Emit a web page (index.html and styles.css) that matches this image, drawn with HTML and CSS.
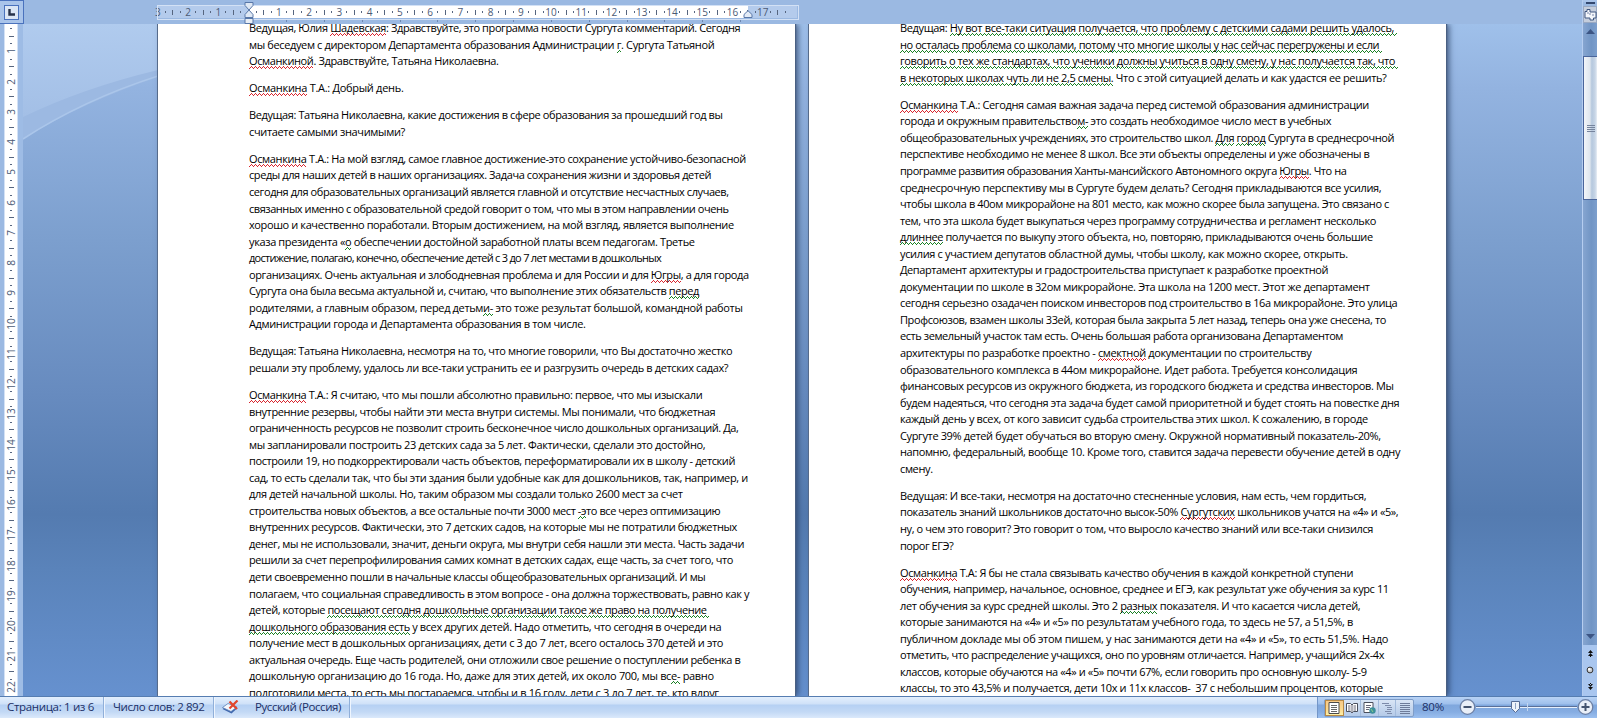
FILE: index.html
```
<!DOCTYPE html>
<html lang="ru">
<head>
    <meta charset="UTF-8">
    <meta name="viewport" content="width=device-width, initial-scale=1.0">
    <title>Документ</title>
    <link rel="stylesheet" href="styles.css">
</head>
<body>
    <div class="window">
        <div class="main">
            <div class="top-ruler">
                <div class="tab-box"><div class="tab-button">
                    <svg width="7" height="7" viewBox="0 0 7 7"><path d="M1.5 0V5.5H7" fill="none" stroke="#27324a" stroke-width="2.4"/></svg>
                </div></div>
                <div class="h-ruler">
                    <div class="scale" id="hScale"></div>
                    <svg class="indent" width="10" height="22" viewBox="0 0 10 22">
                        <path d="M1 .5H9V3.5L5 8L9 12.500V15.500H1V12.500L5 8L1 3.500Z" fill="#dfe8f4" stroke="#5877a8"/>
                        <path d="M1 16.500H9V21.500H1Z" fill="#e8eef6" stroke="#5877a8"/>
                    </svg>
                    <svg class="indent-right" width="10" height="8" viewBox="0 0 10 8">
                        <path d="M1 7.500V4.500L5 .7L9 4.500V7.500Z" fill="#e3ebf6" stroke="#5877a8"/>
                    </svg>
                </div>
            </div>
            <div class="workspace">
                <div class="v-ruler"><div class="v-scale" id="vScale"></div></div>
                <div class="desk">
                    <svg class="swoosh" width="135" height="672" viewBox="0 0 135 672">
                        <defs>
                            <linearGradient id="sky" x1="0" y1="0" x2="0" y2="1">
                                <stop offset="0" stop-color="#b0cbee"/>
                                <stop offset="1" stop-color="#a3bfe6"/>
                            </linearGradient>
                        </defs>
                        <path d="M0 0H135V53Q60 78 0 115Z" fill="#9cb9e2"/>
                        <path d="M0 0H135V46Q60 64 0 93Z" fill="url(#sky)"/>
                        <path d="M0 115Q60 76 135 52" fill="none" stroke="#abc6ea" stroke-width="1.5"/>
                    </svg>
                    <div class="page">
                        <p>
                            <span class="line" data-width="491.3">Ведущая, Юлия <u class="spell">Шадевская</u>: Здравствуйте, это программа новости Сургута комментарий. Сегодня</span>
                            <span class="line" data-width="465.3">мы беседуем с директором Департамента образования Администрации <u class="grammar">г</u>. Сургута Татьяной</span>
                            <span class="line" data-width="249.5"><u class="spell">Османкиной</u>. Здравствуйте, Татьяна Николаевна.</span>
                        </p>
                        <p>
                            <span class="line" data-width="154.5"><u class="spell">Османкина</u> Т.А.: Добрый день.</span>
                        </p>
                        <p>
                            <span class="line" data-width="473.5">Ведущая: Татьяна Николаевна, какие достижения в сфере образования за прошедший год вы</span>
                            <span class="line" data-width="156">считаете самыми значимыми?</span>
                        </p>
                        <p>
                            <span class="line" data-width="497"><u class="spell">Османкина</u> Т.А.: На мой взгляд, самое главное достижение-это сохранение устойчиво-безопасной</span>
                            <span class="line" data-width="462">среды для наших детей в наших организациях. Задача сохранения жизни и здоровья детей</span>
                            <span class="line" data-width="479.7">сегодня для образовательных организаций является главной и отсутствие несчастных случаев,</span>
                            <span class="line" data-width="479.5">связанных именно с образовательной средой говорит о том, что мы в этом направлении очень</span>
                            <span class="line" data-width="484.7">хорошо и качественно поработали. Вторым достижением, на мой взгляд, является выполнение</span>
                            <span class="line" data-width="445.6">указа президента «<u class="grammar">о</u> обеспечении достойной заработной платы всем педагогам. Третье</span>
                            <span class="line" data-width="412">достижение, полагаю, конечно, обеспечение детей с 3 до 7 лет местами в дошкольных</span>
                            <span class="line" data-width="499.6">организациях. Очень актуальная и злободневная проблема и для России и для <u class="spell">Югры</u>, а для города</span>
                            <span class="line" data-width="450">Сургута она была весьма актуальной и, считаю, что выполнение этих обязательств <u class="grammar">перед</u></span>
                            <span class="line" data-width="493.5">родителями, а главным образом, перед детьм<u class="grammar">и-</u> это тоже результат большой, командной работы</span>
                            <span class="line" data-width="336.6">Администрации города и Департамента образования в том числе.</span>
                        </p>
                        <p>
                            <span class="line" data-width="483.3">Ведущая: Татьяна Николаевна, несмотря на то, что многие говорили, что Вы достаточно жестко</span>
                            <span class="line" data-width="479.2">решали эту проблему, удалось ли все-таки устранить ее и разгрузить очередь в детских садах?</span>
                        </p>
                        <p>
                            <span class="line" data-width="453.3"><u class="spell">Османкина</u> Т.А.: Я считаю, что мы пошли абсолютно правильно: первое, что мы изыскали</span>
                            <span class="line" data-width="466.3">внутренние резервы, чтобы найти эти места внутри системы. Мы понимали, что бюджетная</span>
                            <span class="line" data-width="489.3">ограниченность ресурсов не позволит строить бесконечное число дошкольных организаций. Да,</span>
                            <span class="line" data-width="456.3">мы запланировали построить 23 детских сада за 5 лет. Фактически, сделали это достойно,</span>
                            <span class="line" data-width="486">построили 19, но подкорректировали часть объектов, переформатировали их в школу - детский</span>
                            <span class="line" data-width="499">сад, то есть сделали так, что бы эти здания были удобные как для дошкольников, так, например, и</span>
                            <span class="line" data-width="433.7">для детей начальной школы. Но, таким образом мы создали только 2600 мест за счет</span>
                            <span class="line" data-width="471.3">строительства новых объектов, а все остальные почти 3000 мест <u class="grammar">-э</u>то все через оптимизацию</span>
                            <span class="line" data-width="488">внутренних ресурсов. Фактически, это 7 детских садов, на которые мы не потратили бюджетных</span>
                            <span class="line" data-width="495">денег, мы не использовали, значит, деньги округа, мы внутри себя нашли эти места. Часть задачи</span>
                            <span class="line" data-width="484">решили за счет перепрофилирования самих комнат в детских садах, еще часть, за счет того, что</span>
                            <span class="line" data-width="456.3">дети своевременно пошли в начальные классы общеобразовательных организаций. И мы</span>
                            <span class="line" data-width="500">полагаем, что социальная справедливость в этом вопросе - она должна торжествовать, равно как у</span>
                            <span class="line" data-width="460">детей, которые <u class="grammar">посещают сегодня дошкольные организации такое же право на получение&nbsp;</u></span>
                            <span class="line" data-width="472.3"><u class="grammar">дошкольного образования есть</u> у всех других детей. Надо отметить, что сегодня в очереди на</span>
                            <span class="line" data-width="474">получение мест в дошкольных организациях, дети с 3 до 7 лет, всего осталось 370 детей и это</span>
                            <span class="line" data-width="491.3">актуальная очередь. Еще часть родителей, они отложили свое решение о поступлении ребенка в</span>
                            <span class="line" data-width="464.7">дошкольную организацию до 16 года. Но, даже для этих детей, их около 700, мы вс<u class="grammar">е-</u> равно</span>
                            <span class="line" data-width="469.7">подготовили места, то есть мы постараемся, чтобы и в 16 году, дети с 3 до 7 лет, те, кто вдруг</span>
                        </p>
                    </div>
                    <div class="page">
                        <p>
                            <span class="line" data-width="496.5">Ведущая: <u class="grammar">Ну вот все-таки ситуация получается, что проблему с детскими садами решить удалось,&nbsp;</u></span>
                            <span class="line" data-width="481.5"><u class="grammar">но осталась проблема со школами, потому что многие школы у нас сейчас перегружены и если&nbsp;</u></span>
                            <span class="line" data-width="497.5"><u class="grammar">говорить о тех же стандартах, что ученики должны учиться в одну смену, у нас получается так, что&nbsp;</u></span>
                            <span class="line" data-width="486.5"><u class="grammar">в некоторых школах чуть ли не 2,5 смены.</u> Что с этой ситуацией делать и как удастся ее решить?</span>
                        </p>
                        <p>
                            <span class="line" data-width="469"><u class="spell">Османкина</u> Т.А.: Сегодня самая важная задача перед системой образования администрации</span>
                            <span class="line" data-width="431">города и окружным правительство<u class="grammar">м-</u> это создать необходимое число мест в учебных</span>
                            <span class="line" data-width="494">общеобразовательных учреждениях, это строительство школ. <u class="grammar">Для</u> <u class="grammar">город</u> Сургута в среднесрочной</span>
                            <span class="line" data-width="469.3">перспективе необходимо не менее 8 школ. Все эти объекты определены и уже обозначены в</span>
                            <span class="line" data-width="446.3">программе развития образования Ханты-мансийского Автономного округа <u class="spell">Югры</u>. Что на</span>
                            <span class="line" data-width="481.3">среднесрочную перспективу мы в Сургуте будем делать? Сегодня прикладываются все усилия,</span>
                            <span class="line" data-width="489">чтобы школа в 40ом микрорайоне на 801 место, как можно скорее была запущена. Это связано с</span>
                            <span class="line" data-width="476">тем, что эта школа будет выкупаться через программу сотрудничества и регламент несколько</span>
                            <span class="line" data-width="472.7"><u class="grammar">длиннее</u> получается по выкупу этого объекта, но, повторяю, прикладываются очень большие</span>
                            <span class="line" data-width="447.7">усилия с участием депутатов областной думы, чтобы школу, как можно скорее, открыть.</span>
                            <span class="line" data-width="428">Департамент архитектуры и градостроительства приступает к разработке проектной</span>
                            <span class="line" data-width="469.7">документации по школе в 32ом микрорайоне. Эта школа на 1200 мест. Этот же департамент</span>
                            <span class="line" data-width="497.3">сегодня серьезно озадачен поиском инвесторов под строительство в 16а микрорайоне. Это улица</span>
                            <span class="line" data-width="486">Профсоюзов, взамен школы 33ей, которая была закрыта 5 лет назад, теперь она уже снесена, то</span>
                            <span class="line" data-width="443">есть земельный участок там есть. Очень большая работа организована Департаментом</span>
                            <span class="line" data-width="411.3">архитектуры по разработке проектно - <u class="spell">смектной</u> документации по строительству</span>
                            <span class="line" data-width="457.3">образовательного комплекса в 44ом микрорайоне. Идет работа. Требуется консолидация</span>
                            <span class="line" data-width="493.7">финансовых ресурсов из окружного бюджета, из городского бюджета и средства инвесторов. Мы</span>
                            <span class="line" data-width="499.3">будем надеяться, что сегодня эта задача будет самой приоритетной и будет стоять на повестке дня</span>
                            <span class="line" data-width="467.7">каждый день у всех, от кого зависит судьба строительства этих школ. К сожалению, в городе</span>
                            <span class="line" data-width="480.7">Сургуте 39% детей будет обучаться во вторую смену. Окружной нормативный показатель-20%,</span>
                            <span class="line" data-width="500">напомню, федеральный, вообще 10. Кроме того, ставится задача перевести обучение детей в одну</span>
                            <span class="line" data-width="32.7">смену.</span>
                        </p>
                        <p>
                            <span class="line" data-width="466.3">Ведущая: И все-таки, несмотря на достаточно стесненные условия, нам есть, чем гордиться,</span>
                            <span class="line" data-width="498.3">показатель знаний школьников достаточно высок-50% <u class="spell">Сургутских</u> школьников учатся на «4» и «5»,</span>
                            <span class="line" data-width="473">ну, о чем это говорит? Это говорит о том, что выросло качество знаний или все-таки снизился</span>
                            <span class="line" data-width="53.3">порог ЕГЭ?</span>
                        </p>
                        <p>
                            <span class="line" data-width="453"><u class="spell">Османкина</u> Т.А: Я бы не стала связывать качество обучения в каждой конкретной ступени</span>
                            <span class="line" data-width="488.7">обучения, например, начальное, основное, среднее и ЕГЭ, как результат уже обучения за курс 11</span>
                            <span class="line" data-width="460.3">лет обучения за курс средней школы. Это 2 <u class="grammar">разных</u> показателя. И что касается числа детей,</span>
                            <span class="line" data-width="453">которые занимаются на «4» и «5» по результатам учебного года, то здесь не 57, а 51,5%, в</span>
                            <span class="line" data-width="488">публичном докладе мы об этом пишем, у нас занимаются дети на «4» и «5», то есть 51,5%. Надо</span>
                            <span class="line" data-width="484">отметить, что распределение учащихся, оно по уровням отличается. Например, учащийся 2х-4х</span>
                            <span class="line" data-width="466.7">классов, которые обучаются на «4» и «5» почти 67%, если говорить про основную школу- 5-9</span>
                            <span class="line" data-width="482.7">классы, то это 43,5% и получается, дети 10х и 11х классов-&nbsp; 37 с небольшим процентов, которые</span>
                        </p>
                    </div>
                </div>
            </div>
        </div>
        <div class="scrollbar">
            <div class="split"></div>
            <div class="ruler-toggle">
                <svg width="13" height="13" viewBox="0 0 13 13"><path d="M1 3.500H3V1.500H6V4H12V10H9.500V12H6V10H1Z" fill="#f4f7fb" stroke="#3f5680"/><path d="M6 5V7M9 6V8M3 5H5" stroke="#7a86a8"/></svg>
            </div>
            <div class="track">
                <svg class="arrow" width="9" height="5" viewBox="0 0 9 5"><path d="M0 5L4.500 0L9 5Z" fill="#3c5584"/></svg>
                <div class="thumb"><i></i><i></i><i></i><i></i></div>
                <svg class="arrow down" width="9" height="5" viewBox="0 0 9 5"><path d="M0 0L4.500 5L9 0Z" fill="#3c5584"/></svg>
            </div>
            <div class="browse">
                <svg width="5" height="7" viewBox="0 0 5 7"><path d="M0 3L2.500 0L5 3ZM0 6L2.500 3L5 6ZM2 5H3V7H2Z" fill="#111"/></svg>
                <svg width="8" height="8" viewBox="0 0 8 8"><circle cx="4" cy="4" r="2.900" fill="#c9cdd3" stroke="#333"/><circle cx="3.200" cy="3.200" r="1.200" fill="#fff"/></svg>
                <svg width="5" height="7" viewBox="0 0 5 7"><path d="M0 1L2.500 4L5 1ZM0 4L2.500 7L5 4ZM2 0H3V2H2Z" fill="#111"/></svg>
            </div>
        </div>
    </div>

    <div class="status">
        <div class="cell pages"><span class="line" data-width="87">Страница: 1 из 6</span></div>
        <div class="cell words"><span class="line" data-width="91.500">Число слов: 2 892</span></div>
        <div class="cell lang">
            <svg width="17" height="15" viewBox="0 0 17 15">
                <path d="M.5 9L6 4.500L15.500 8L9.500 13.500Z" fill="#3f67ad"/>
                <path d="M.5 7.500L6 3.500L15 7L9 11.500Z" fill="#f4f7fc" stroke="#5b7fb8" stroke-width=".8"/>
                <path d="M7.500 1.500L15 9M15.500 .5L7.500 8.500" stroke="#e2452c" stroke-width="2.200"/>
            </svg>
            <span class="line" data-width="86">Русский (Россия)</span>
        </div>
        <div class="status-right">
            <div class="views">
                <div class="view active"><svg width="12" height="12" viewBox="0 0 12 12"><path d="M1 .5H11V11.500H1Z" fill="#fff" stroke="#4a4a4a"/><path d="M3 3.500H9M3 5.500H9M3 7.500H9M3 9.500H9" stroke="#666"/></svg></div>
                <div class="view"><svg width="12" height="12" viewBox="0 0 12 12"><path d="M.5 1.500H4.500L6 3L7.500 1.500H11.500V9.500H7.500L6 11L4.500 9.500H.5Z" fill="#fff" stroke="#4a4f5c"/><path d="M6 3V11M2 4H4.500M2 6H4.500M2 8H4.500M7.500 4H10M7.500 6H10M7.500 8H10" stroke="#667"/></svg></div>
                <div class="view"><svg width="13" height="12" viewBox="0 0 13 12"><path d="M1 .5H10V10.500H1Z" fill="#fff" stroke="#4a4f5c"/><path d="M3 3.500H8M3 5.500H7M3 7.500H6" stroke="#667"/><circle cx="9.500" cy="8.500" r="3.200" fill="#3d8f9b"/><path d="M8 7L10 10" stroke="#8fd08a"/></svg></div>
                <div class="view"><svg width="12" height="12" viewBox="0 0 12 12"><path d="M1 1.500H8M4 3.500H10M6 5.500H11M6 7.500H11M4 9.500H10M6 11.500H11" stroke="#7d8baa"/></svg></div>
                <div class="view"><svg width="12" height="12" viewBox="0 0 12 12"><path d="M1 1.500H11M1 3.500H11M1 5.500H11M1 7.500H11M1 9.500H11M1 11.500H11" stroke="#6d7b99"/></svg></div>
            </div>
            <span class="line percent" data-width="22">80%</span>
            <svg class="zoom" width="138" height="20" viewBox="0 0 138 20">
                <path d="M17 9.500H118" stroke="#5a7099"/><path d="M17 10.500H118" stroke="#e7f0fc"/>
                <path d="M68.500 6V14" stroke="#c3d6f0"/>
                <circle cx="8.500" cy="10" r="7.300" fill="#e9eff8" stroke="#6b7fa4" stroke-width="1.300"/>
                <path d="M4.500 10H12.500" stroke="#44546f" stroke-width="2"/>
                <circle cx="126.500" cy="10" r="7.300" fill="#e9eff8" stroke="#6b7fa4" stroke-width="1.300"/>
                <path d="M122.500 10H130.500M126.500 6V14" stroke="#44546f" stroke-width="2"/>
                <path d="M52.500 4.500H60.500V11.500L56.500 15.500L52.500 11.500Z" fill="#eef3fa" stroke="#566c95"/><path d="M56.500 6V12" stroke="#8fa3c4"/>
            </svg>
        </div>
    </div>

    <script>
        // ruler marks, four cells per centimetre
        function buildScale(id, from, to) {
            const scale = document.getElementById(id);
            for (let k = from; k <= to; k++) {
                const cell = document.createElement("span");
                if (k === 0) {
                    cell.className = "zero";
                } else if (k % 4 === 0) {
                    cell.className = "num";
                    cell.innerHTML = "<b>" + Math.abs(k / 4) + "</b>";
                } else if (k % 2 === 0) {
                    cell.className = "bar";
                } else {
                    cell.className = "dot";
                }
                scale.appendChild(cell);
            }
        }

        // spread the letters so that each line has its own set width
        function fitLines() {
            document.querySelectorAll(".line").forEach(line => {
                const target = parseFloat(line.dataset.width);
                const natural = line.getBoundingClientRect().width;
                line.style.letterSpacing = (target - natural) / line.textContent.length + "px";
            });
        }

        buildScale("hScale", -12, 71);
        buildScale("vScale", 1, 88);
        fitLines();
    </script>
</body>
</html>
```
FILE: styles.css
```
* {
    box-sizing: border-box;
}

body {
    margin: 0;
    width: 1597px;
    height: 718px;
    overflow: hidden;
    font-family: "Open Sans", "Noto Sans", sans-serif;
    font-size: 11px;
    color: #000;
}

svg {
    display: block;
    flex: none;
}

.window {
    display: flex;
    height: 696px;
}

.main {
    width: 1582px;
}

/* rulers */
.top-ruler {
    display: flex;
    height: 24px;
    background: #9bb9e2;
}

.tab-box {
    width: 24px;
    height: 24px;
    padding: 4px;
    border: solid #4a72bd;
    border-width: 1px 1px 1px 0;
    background: #a9c4ea;
}

.tab-button {
    width: 15px;
    height: 15px;
    display: flex;
    align-items: center;
    justify-content: center;
    background: #dbe6f5;
    border: 1px solid #4a72bd;
}

.h-ruler {
    position: relative;
    width: 640px;
    height: 24px;
    margin-left: 133px;
    background:
        repeating-linear-gradient(90deg, #6d87b0 0 1px, transparent 1px 37.85px) 129px 19px / 456px 3px no-repeat,
        linear-gradient(90deg, #b4cbec 0 91px, #fff 91px 591px, #b4cbec 591px) 0 5px / 640px 13px no-repeat;
}

.h-ruler::after {
    content: "";
    position: absolute;
    left: 0;
    top: 5px;
    width: 640px;
    height: 13px;
    border: 1px solid #d3e1f5;
}

.scale {
    display: flex;
    margin-left: -3px;
    height: 24px;
}

.scale span,
.v-scale span {
    flex: none;
    display: flex;
    align-items: center;
    justify-content: center;
    width: 7.57px;
    height: 24px;
}

.num b {
    font-size: 10px;
    font-weight: normal;
    line-height: 12px;
    color: #4b5a75;
}

.bar::after,
.dot::after {
    content: "";
    width: 1px;
    height: 5px;
    background: #56657f;
}

.dot::after {
    height: 2px;
}

.indent {
    position: absolute;
    left: 87px;
    top: 2px;
    z-index: 1;
}

.indent-right {
    position: absolute;
    left: 586px;
    top: 10px;
    z-index: 1;
}

.workspace {
    display: flex;
    height: 672px;
}

.v-ruler {
    width: 23px;
    padding: 1px 0 0 5px;
    overflow: hidden;
    background: linear-gradient(90deg, #9bb9e2 0 4px, #d3e1f5 4px 5px, #fff 5px 17px, #d3e1f5 17px 18px, #9ebce5 18px);
}

.v-scale {
    width: 12px;
}

.v-scale span {
    width: 12px;
    height: 7.575px;
}

.v-scale b {
    transform: rotate(-90deg);
}

.v-scale .bar::after {
    width: 5px;
    height: 1px;
}

.v-scale .dot::after {
    width: 2px;
    height: 1px;
}

/* document area */
.desk {
    position: relative;
    display: flex;
    gap: 14px;
    flex: 1;
    padding-left: 135px;
    overflow: hidden;
    background: linear-gradient(#9fc0ea 0, #93b3e0 65px, #7c9fce 216px, #678bbf 370px, #547bb0 490px, #5a83ba 545px, #6691cf 672px);
}

.swoosh {
    position: absolute;
    left: 0;
    top: 0;
}

.page {
    position: relative;
    width: 637px;
    height: 672px;
    padding-left: 91px;
    background: #fff;
    box-shadow: -1px 0 0 #566b8b, 1px 0 1px #4a6082, 3px 0 6px rgba(30, 50, 85, 0.7);
}

.page p {
    margin: 0 0 10.5px;
}

.page p:first-child {
    margin-top: -3.9px;
}

.line {
    display: block;
    width: max-content;
    white-space: nowrap;
    line-height: 16.55px;
}

/* zigzag under the marked words */
.line u {
    padding-bottom: 1px;
    text-decoration: none;
    background-repeat: repeat-x;
    background-position: left bottom;
}

.spell {
    background-image: url("data:image/svg+xml,%3Csvg xmlns='http://www.w3.org/2000/svg' width='4' height='3'%3E%3Cpath d='M0 2h1v1h-1zM1 1h1v1h-1zM2 0h1v1h-1zM3 1h1v1h-1z' fill='%23d8262e'/%3E%3C/svg%3E");
}

.grammar {
    background-image: url("data:image/svg+xml,%3Csvg xmlns='http://www.w3.org/2000/svg' width='4' height='3'%3E%3Cpath d='M0 2h1v1h-1zM1 1h1v1h-1zM2 0h1v1h-1zM3 1h1v1h-1z' fill='%23198023'/%3E%3C/svg%3E");
}

/* vertical scrollbar */
.scrollbar {
    width: 15px;
    display: flex;
    flex-direction: column;
    border-left: 1px solid #b5cdf0;
    background: #9bb9e2;
}

.split {
    height: 6px;
    border-top: 2px solid #a9c4ea;
    background: linear-gradient(#33486f, #33486f) 3px 0 / 9px 2px no-repeat;
}

.ruler-toggle {
    height: 17px;
    display: flex;
    align-items: center;
    justify-content: center;
    background: #c5cedd;
    border: 1px solid #9aa9c2;
}

.track {
    height: 622px;
    display: flex;
    flex-direction: column;
    align-items: center;
    background: linear-gradient(90deg, #86a5d0, #7195c5 60%, #7d9fcd);
}

.arrow {
    margin: 6px 0 22px;
}

.arrow.down {
    margin: auto 0 6px;
}

.thumb {
    width: 14px;
    height: 144px;
    display: flex;
    flex-direction: column;
    align-items: center;
    justify-content: center;
    gap: 1px;
    border: 1px solid #4a659b;
    border-right: 0;
    background: linear-gradient(90deg, #f2f5f9 0, #dfe6ee 45%, #b5c8de 60%, #c7d5e6 85%, #e8eef5);
}

.thumb i {
    width: 8px;
    height: 1px;
    background: #76849d;
}

.browse {
    flex: 1;
    display: flex;
    flex-direction: column;
    align-items: center;
    justify-content: space-between;
    padding: 5px 0 6px;
    background: #a9c6ef;
}

/* status bar */
.status {
    display: flex;
    height: 22px;
    font-size: 11.5px;
    color: #1b2f66;
    border-top: 1px solid #567db1;
    background: linear-gradient(#e3effd 0, #cfe1f8 7px, #b5d0f3 8px, #c3d9f5 15px, #dbe9fb 21px);
}

.status .line {
    line-height: 20px;
    margin-top: -1px;
}

.cell {
    display: flex;
    align-items: center;
    border-right: 1px solid #90afd9;
    box-shadow: 1px 0 0 #eef5fe;
}

.pages {
    width: 104px;
    padding-left: 7px;
}

.words {
    width: 110px;
    padding-left: 9px;
}

.lang {
    width: 136px;
    padding-left: 8px;
    gap: 16px;
}

.status-right {
    display: flex;
    align-items: center;
    width: 280px;
    margin-left: auto;
    padding-left: 6px;
    border-left: 1px solid #7396c8;
    background: linear-gradient(#b9d3f5 0, #9fc0ec 7px, #7fa7dd 8px, #86ade2 15px, #9cc0f0 21px);
}

.views {
    display: flex;
    width: 92px;
    height: 18px;
    border: 1px solid #7f9dc8;
    border-radius: 2px;
    background: linear-gradient(#d9e5f5, #b4cae8);
}

.view {
    flex: 1;
    display: flex;
    align-items: center;
    justify-content: center;
    border-right: 1px solid #a3bbdc;
}

.view:last-child {
    border-right: 0;
}

.view.active {
    background: linear-gradient(#f7c987, #fbd98f 60%, #fdf0a8);
    border: 1px solid #b98a45;
}

.percent {
    width: max-content;
    margin-left: 8px;
}

.zoom {
    margin: -2px 0 0 15px;
}
```
